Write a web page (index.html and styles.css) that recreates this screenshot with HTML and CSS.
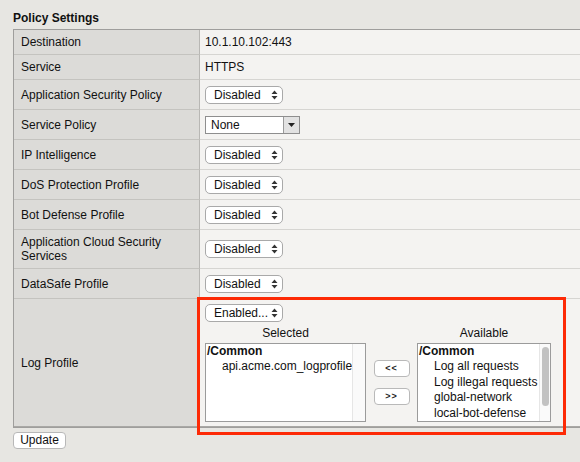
FILE: index.html
```html
<!DOCTYPE html>
<html>
<head>
<meta charset="utf-8">
<link rel="stylesheet" href="styles.css">
</head>
<body>
<div class="page">
  <div class="title">Policy Settings</div>
  <div class="settings">
    <div class="label">Destination</div>
    <div class="value">10.1.10.102:443</div>

    <div class="label">Service</div>
    <div class="value">HTTPS</div>

    <div class="label">Application Security Policy</div>
    <div class="value"><div class="select"><span>Disabled</span><svg class="updown" width="7" height="10" viewBox="0 0 7 10"><path d="M0.5 4 L3.5 0.5 L6.5 4 Z M0.5 6 L3.5 9.5 L6.5 6 Z" fill="#333"/></svg></div></div>

    <div class="label">Service Policy</div>
    <div class="value"><div class="combo"><span class="combo-text">None</span><span class="combo-btn"><svg width="7" height="4" viewBox="0 0 7 4"><path d="M0 0 L7 0 L3.5 4 Z" fill="#222"/></svg></span></div></div>

    <div class="label">IP Intelligence</div>
    <div class="value"><div class="select"><span>Disabled</span><svg class="updown" width="7" height="10" viewBox="0 0 7 10"><path d="M0.5 4 L3.5 0.5 L6.5 4 Z M0.5 6 L3.5 9.5 L6.5 6 Z" fill="#333"/></svg></div></div>

    <div class="label">DoS Protection Profile</div>
    <div class="value"><div class="select"><span>Disabled</span><svg class="updown" width="7" height="10" viewBox="0 0 7 10"><path d="M0.5 4 L3.5 0.5 L6.5 4 Z M0.5 6 L3.5 9.5 L6.5 6 Z" fill="#333"/></svg></div></div>

    <div class="label">Bot Defense Profile</div>
    <div class="value"><div class="select"><span>Disabled</span><svg class="updown" width="7" height="10" viewBox="0 0 7 10"><path d="M0.5 4 L3.5 0.5 L6.5 4 Z M0.5 6 L3.5 9.5 L6.5 6 Z" fill="#333"/></svg></div></div>

    <div class="label">Application Cloud Security Services</div>
    <div class="value"><div class="select"><span>Disabled</span><svg class="updown" width="7" height="10" viewBox="0 0 7 10"><path d="M0.5 4 L3.5 0.5 L6.5 4 Z M0.5 6 L3.5 9.5 L6.5 6 Z" fill="#333"/></svg></div></div>

    <div class="label">DataSafe Profile</div>
    <div class="value"><div class="select"><span>Disabled</span><svg class="updown" width="7" height="10" viewBox="0 0 7 10"><path d="M0.5 4 L3.5 0.5 L6.5 4 Z M0.5 6 L3.5 9.5 L6.5 6 Z" fill="#333"/></svg></div></div>

    <div class="label last">Log Profile</div>
    <div class="value last log">
      <div class="select"><span>Enabled...</span><svg class="updown" width="7" height="10" viewBox="0 0 7 10"><path d="M0.5 4 L3.5 0.5 L6.5 4 Z M0.5 6 L3.5 9.5 L6.5 6 Z" fill="#333"/></svg></div>
      <div class="chooser">
        <div class="col col-selected">
          <div class="col-title">Selected</div>
          <div class="list">
            <div class="items">
              <div class="group">/Common</div>
              <div class="item">api.acme.com_logprofile</div>
            </div>
            <div class="track track-wide"></div>
          </div>
        </div>
        <div class="moves">
          <div class="move">&lt;&lt;</div>
          <div class="move">&gt;&gt;</div>
        </div>
        <div class="col col-available">
          <div class="col-title">Available</div>
          <div class="list">
            <div class="items">
              <div class="group">/Common</div>
              <div class="item">Log all requests</div>
              <div class="item">Log illegal requests</div>
              <div class="item">global-network</div>
              <div class="item">local-bot-defense</div>
            </div>
            <div class="track track-narrow"><div class="thumb"></div></div>
          </div>
        </div>
      </div>
      <div class="highlight"></div>
    </div>
  </div>
  <div class="update">Update</div>
</div>
</body>
</html>
```

FILE: styles.css
```css
* { box-sizing: border-box; }
html, body {
  margin: 0;
  padding: 0;
  background: #e7e6e2;
  overflow: hidden;
}
body {
  font-family: "Liberation Sans", Arial, Helvetica, sans-serif;
  font-size: 12px;
  color: #111;
  width: 580px;
  height: 462px;
}
.page {
  padding: 11px 0 0 13px;
}
.title {
  font-weight: bold;
  line-height: 14px;
  height: 14px;
  margin-bottom: 4px;
  color: #111;
}
.settings {
  display: grid;
  grid-template-columns: 186px 1fr;
  grid-template-rows: 25px 25px 30px 30px 30px 30px 30px 39px 30px 128px;
  width: 567px;
  border: 1px solid #9f9e9c;
  border-right: none;
}
.label {
  background: #dcdbd8;
  border-right: 1px solid #b8b7b4;
  border-bottom: 1px solid #c4c3bf;
  padding: 0 8px 0 7px;
  display: flex;
  align-items: center;
  line-height: 14px;
}
.value {
  background: #f4f3f1;
  border-bottom: 1px solid #d6d5d2;
  padding-left: 5px;
  display: flex;
  align-items: center;
  line-height: 14px;
}
.label.last, .value.last {
  border-bottom: 1px solid #a9a8a5;
}
.select {
  width: 78px;
  height: 18px;
  background: #fff;
  border: 1px solid #a9a9a9;
  border-radius: 5px;
  display: flex;
  align-items: center;
  justify-content: space-between;
  padding: 0 4px 0 8px;
  line-height: 14px;
}
.updown { display: block; }
.combo {
  display: flex;
  width: 95px;
  height: 18px;
  border: 1px solid #8e8e8e;
  background: #fff;
}
.combo-text {
  flex: 1;
  padding-left: 5px;
  line-height: 16px;
}
.combo-btn {
  width: 16px;
  border-left: 1px solid #9a9a9a;
  background: #e2e2e2;
  display: flex;
  align-items: center;
  justify-content: center;
}
.combo-btn svg { display: block; }
.value.log {
  position: relative;
  flex-direction: column;
  align-items: flex-start;
  justify-content: flex-start;
  padding-top: 5px;
}
.chooser {
  display: flex;
  margin-top: 4px;
}
.col-title {
  text-align: center;
  line-height: 14px;
  height: 14px;
  margin-bottom: 3px;
}
.col-selected { width: 161px; }
.col-available { width: 134px; }
.list {
  height: 79px;
  background: #fff;
  border: 1px solid #9b9b9b;
  display: flex;
}
.items {
  flex: 1;
  padding-left: 1px;
  line-height: 15.4px;
  white-space: nowrap;
  overflow: hidden;
}
.group { font-weight: bold; }
.item { padding-left: 15px; }
.track {
  border-left: 1px solid #e6e6e6;
  background: #fafafa;
}
.track-wide { width: 13px; }
.track-narrow { width: 11px; padding: 3px 0 0 2px; }
.thumb {
  width: 7px;
  height: 59px;
  border-radius: 4px;
  background: #c2c2c2;
}
.moves {
  width: 51px;
  margin-top: 17px;
  height: 79px;
  display: flex;
  flex-direction: column;
  align-items: center;
  justify-content: center;
  gap: 11px;
}
.move {
  width: 36px;
  height: 17px;
  background: #fff;
  border: 1px solid #b9b9b9;
  border-radius: 4px;
  font-size: 9px;
  line-height: 15px;
  text-align: center;
  letter-spacing: 1px;
  font-weight: bold;
  color: #222;
}
.highlight {
  position: absolute;
  left: -3px;
  top: -2px;
  width: 369px;
  height: 138px;
  border: 3px solid #fd2a06;
  pointer-events: none;
}
.update {
  margin-top: 4px;
  width: 53px;
  height: 17px;
  background: #fff;
  border: 1px solid #b8b8b8;
  border-radius: 4px;
  text-align: center;
  line-height: 15px;
}
```
